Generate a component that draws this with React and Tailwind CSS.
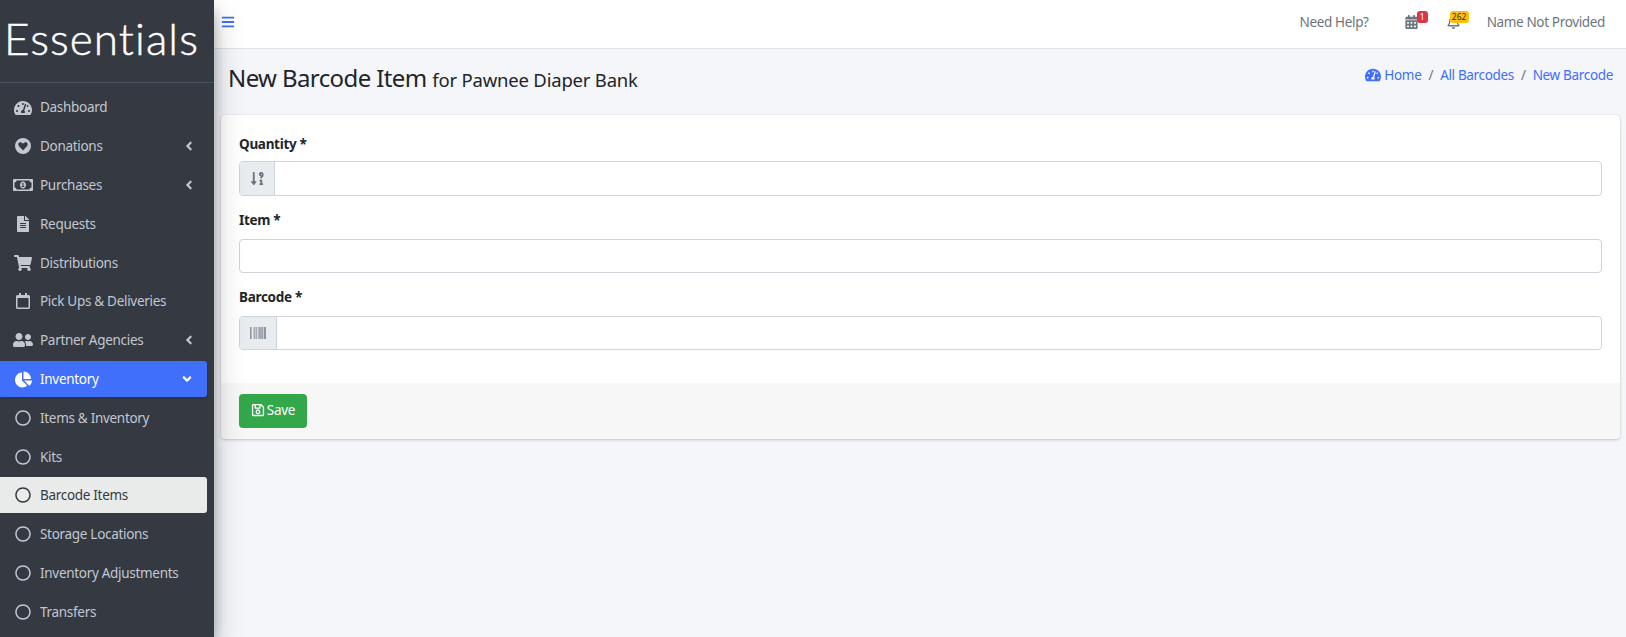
import React from "react";
import { FaTachometerAlt, FaRegMoneyBillAlt, FaFileAlt, FaShoppingCart, FaRegCalendar, FaUserFriends, FaChartPie, FaRegCircle, FaBars, FaCalendarAlt, FaRegBell, FaSortNumericDownAlt, FaBarcode, FaRegSave, FaAngleLeft, FaAngleDown } from "react-icons/fa";

const HeartCircle = ({ className }) => (
  <svg viewBox="0 0 16 16" className={className} fill="currentColor">
    <path fillRule="evenodd" d="M8 0a8 8 0 1 1 0 16A8 8 0 0 1 8 0Zm0 12.4 3.9-4.1c1.1-1.2 1-2.9-.1-3.7-1-.7-2.300-.4-3 .4L8 5.800 7.200 5c-.7-.8-2-1.100-3-.4-1.100.8-1.200 2.500-.1 3.700L8 12.400Z" />
  </svg>
);

const items = [
  { label: "Dashboard", icon: <FaTachometerAlt className="w-[18px] h-[18px]" /> },
  { label: "Donations", icon: <HeartCircle className="w-[16px] h-[16px]" />, arrow: true },
  { label: "Purchases", icon: <FaRegMoneyBillAlt className="w-[20px] h-[20px]" />, arrow: true },
  { label: "Requests", icon: <FaFileAlt className="w-[16px] h-[16px]" /> },
  { label: "Distributions", icon: <FaShoppingCart className="w-[18px] h-[18px]" /> },
  { label: "Pick Ups & Deliveries", icon: <FaRegCalendar className="w-[16px] h-[16px]" /> },
  { label: "Partner Agencies", icon: <FaUserFriends className="w-[20px] h-[20px]" />, arrow: true },
];
const subs = ["Items & Inventory", "Kits", "Barcode Items", "Storage Locations", "Inventory Adjustments", "Transfers"];

function NavRow({ icon, label, right, cls }) {
  return (
    <div className={`h-[36px] mb-[2.800px] flex items-center w-[207px] rounded-r-[3px] shrink-0 ${cls}`}>
      <span className="w-[40px] pl-[13px] pr-[7px] flex justify-center shrink-0">{icon}</span>
      <span className="text-[13.5px] tracking-[-0.3px] flex-1 whitespace-nowrap">{label}</span>
      {right}
    </div>
  );
}

const labelCls = "flex items-center text-[13.5px] font-bold text-[#212529] tracking-[-0.3px]";

export default function App() {
  return (
    <div className="flex h-screen w-full overflow-hidden bg-[#f4f6f9] font-['Noto_Sans',sans-serif]">
      <aside className="w-[214px] shrink-0 bg-[#343942] text-[#c2c7d0] h-full overflow-hidden flex flex-col shadow-[0_14px_28px_rgba(0,0,0,0.25),0_10px_10px_rgba(0,0,0,0.22)] z-10">
        <div className="h-[83px] shrink-0 border-b border-[#4b545c] flex items-center pl-[4px]">
          <span className="text-[44px] font-['Lato',sans-serif] font-light text-white leading-none whitespace-nowrap tracking-[1.1px] -mt-[7px] [-webkit-text-stroke:0.5px_white]">Essentials</span>
        </div>
        <div className="pt-[6.500px] flex flex-col">
          {items.map((it) => (
            <NavRow key={it.label} icon={it.icon} label={it.label}
              right={it.arrow ? <FaAngleLeft className="w-[14px] h-[14px] mr-[11px]" /> : null} />
          ))}
          <NavRow cls="bg-[#3f6ffb] text-white shadow-sm" icon={<FaChartPie className="w-[17px] h-[17px]" />} label="Inventory"
            right={<FaAngleDown className="w-[14px] h-[14px] mr-[13px]" />} />
          {subs.map((s) => (
            <NavRow key={s} label={s}
              cls={s === "Barcode Items" ? "bg-[#e9ebea] text-[#343a40]" : ""}
              icon={<FaRegCircle className="w-[16px] h-[16px]" />} />
          ))}
        </div>
      </aside>

      <div className="flex-1 min-w-0 flex flex-col">
        <header className="h-[49px] shrink-0 bg-white border-b border-[#dee2e6] flex items-center pl-[7px] pr-[21px] pb-[4px] text-[13.5px] text-[#6c757d] tracking-[-0.35px]">
          <FaBars className="w-[14px] h-[14px] text-[#3f6ffb] -mt-[1px]" />
          <div className="ml-auto flex items-center h-full">
            <span className="mr-[36px]">Need Help?</span>
            <span className="relative mr-[29px] flex">
              <FaCalendarAlt className="w-[13px] h-[14px]" />
              <span className="absolute -top-[4px] left-[12px] h-[12px] min-w-[11px] px-[2px] rounded-[3px] bg-[#dc3545] text-white text-[8.500px] tracking-normal leading-[12px] text-center">1</span>
            </span>
            <span className="relative mr-[27px] flex">
              <FaRegBell className="w-[13px] h-[14px]" />
              <span className="absolute -top-[4px] left-[3px] h-[12px] w-[19px] rounded-[3px] bg-[#ffc107] text-[#1f2d3d] text-[8.500px] tracking-normal leading-[12px] text-center">262</span>
            </span>
            <span>Name Not Provided</span>
          </div>
        </header>

        <div className="h-[66px] shrink-0 flex items-start justify-between pl-[14px] pr-[13px]">
          <h1 className="text-[24px] leading-[34px] mt-[12px] text-[#212529] whitespace-nowrap tracking-[-0.6px]">
            New Barcode Item <small className="text-[18.500px] tracking-[-0.2px]">for Pawnee Diaper Bank</small>
          </h1>
          <div className="flex items-center mt-[16px] text-[13.5px] text-[#3f6ffb] tracking-[-0.33px]">
            <FaTachometerAlt className="w-[16px] h-[16px] mr-[3px]" />
            <span>Home</span>
            <span className="text-[#6c757d] px-[7px]">/</span>
            <span>All Barcodes</span>
            <span className="text-[#6c757d] px-[7px]">/</span>
            <span>New Barcode</span>
          </div>
        </div>

        <div className="ml-[7px] mr-[6px] bg-white rounded-[4px] shadow-[0_0_1px_rgba(0,0,0,0.15),0_1px_3px_rgba(0,0,0,0.2)] overflow-hidden">
          <div className="pl-[18px] pr-[18px] pt-[9px] h-[268px]">
            <div className={`${labelCls} h-[37px] pt-[3px]`}>Quantity *</div>
            <div className="flex h-[35px] border border-[#ced4da] rounded-[4px] bg-white overflow-hidden mb-[7px]">
              <div className="w-[35px] bg-[#e9ecef] border-r border-[#ced4da] flex items-center justify-center text-[#6b7280] shrink-0">
                <FaSortNumericDownAlt className="w-[15px] h-[15px]" />
              </div>
            </div>
            <div className={`${labelCls} h-[36px] pb-[2px]`}>Item *</div>
            <div className="h-[34px] border border-[#ced4da] rounded-[4px] bg-white mb-[6px]" />
            <div className={`${labelCls} h-[37px]`}>Barcode *</div>
            <div className="flex h-[34px] border border-[#ced4da] rounded-[4px] bg-white overflow-hidden">
              <div className="w-[37px] bg-[#e9ecef] border-r border-[#ced4da] flex items-center justify-center text-[#6b7280] shrink-0">
                <FaBarcode className="w-[16px] h-[16px]" />
              </div>
            </div>
          </div>
          <div className="h-[56px] bg-[#f7f7f7] px-[18px] pt-[11px]">
            <button className="h-[34px] w-[68px] pb-[2px] rounded-[4px] bg-[#33a84a] text-white text-[13.5px] flex items-center justify-center gap-[2px] tracking-[-0.3px]">
              <FaRegSave className="w-[14px] h-[14px]" />Save
            </button>
          </div>
        </div>
      </div>
    </div>
  );
}
